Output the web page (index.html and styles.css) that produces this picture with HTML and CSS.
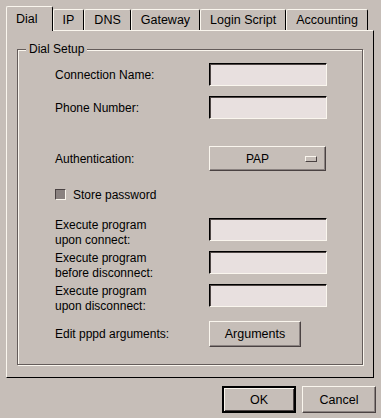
FILE: index.html
```html
<!DOCTYPE html>
<html lang="en">
<head>
  <meta charset="UTF-8">
  <title>Dial Setup</title>
  <link rel="stylesheet" href="styles.css">
</head>
<body>
  <div class="dialog">
    <div class="tabs">
      <div class="tab active">Dial</div>
      <div class="tab">IP</div>
      <div class="tab">DNS</div>
      <div class="tab">Gateway</div>
      <div class="tab">Login Script</div>
      <div class="tab">Accounting</div>
    </div>
    <div class="panel">
      <div class="group">
        <span class="group-title">Dial Setup</span>
        <div class="row first">
          <label class="label">Connection Name:</label>
          <input type="text" class="field">
        </div>
        <div class="row">
          <label class="label">Phone Number:</label>
          <input type="text" class="field">
        </div>
        <div class="row auth">
          <label class="label">Authentication:</label>
          <div class="option-menu">
            <span class="option-text">PAP</span>
            <span class="option-mark"></span>
          </div>
        </div>
        <div class="row check-row">
          <span class="check"></span>
          <span>Store password</span>
        </div>
        <div class="row exec">
          <label class="label two-line">Execute program<br>upon connect:</label>
          <input type="text" class="field">
        </div>
        <div class="row">
          <label class="label two-line">Execute program<br>before disconnect:</label>
          <input type="text" class="field">
        </div>
        <div class="row">
          <label class="label two-line">Execute program<br>upon disconnect:</label>
          <input type="text" class="field">
        </div>
        <div class="row args">
          <label class="label">Edit pppd arguments:</label>
          <button type="button" class="btn btn-args">Arguments</button>
        </div>
      </div>
    </div>
    <div class="actions">
      <button type="button" class="btn btn-default">OK</button>
      <button type="button" class="btn">Cancel</button>
    </div>
  </div>
</body>
</html>
```

FILE: styles.css
```css
body {
  margin: 0;
  padding: 6px 0 0 6px;
  background: #c6beb8;
  font-family: "Liberation Sans", Arial, sans-serif;
  font-size: 12px;
  color: #000;
}

.dialog {
  width: 368px;
}

/* tab strip */
.tabs {
  display: flex;
  align-items: flex-end;
  height: 25px;
  margin-bottom: -1px;
  position: relative;
  z-index: 1;
}

.tab {
  height: 20px;
  line-height: 20px;
  margin-bottom: 1px;
  padding: 0 9px;
  border: 1px solid;
  border-color: #faf6ee #000 transparent #faf6ee;
  border-bottom: 0;
  border-radius: 2px 2px 0 0;
  font-size: 12.5px;
}

.tab.active {
  height: 24px;
  line-height: 24px;
  margin-bottom: 0;
  padding: 0 14px 0 9px;
  background: #c6beb8;
}

/* notebook page */
.panel {
  box-sizing: border-box;
  height: 348px;
  padding: 18px 10px 0 10px;
  border: 1px solid;
  border-color: #faf6ee #000 #000 #faf6ee;
}

.group {
  position: relative;
  box-sizing: border-box;
  height: 316px;
  padding-left: 37px;
  border: 1px solid #645c5a;
  box-shadow: 1px 1px 0 #faf6ee, inset 1px 1px 0 #faf6ee;
}

.group-title {
  position: absolute;
  top: -8px;
  left: 8px;
  padding: 0 3px;
  line-height: 14px;
  background: #c6beb8;
}

.row {
  display: flex;
  align-items: center;
  height: 23px;
  margin-top: 10px;
}

.row.first {
  margin-top: 13px;
}

.row.auth {
  height: 25px;
  margin-top: 27px;
}

.row.check-row {
  height: 17px;
  margin-top: 15px;
}

.row.exec {
  margin-top: 15px;
}

.row.args {
  height: 26px;
  margin-top: 14px;
}

.label {
  width: 154px;
  flex: none;
}

.label.two-line {
  align-self: flex-start;
  line-height: 15px;
}

.field {
  box-sizing: border-box;
  width: 118px;
  height: 23px;
  margin: 0;
  padding: 0 3px;
  border: 1px solid;
  border-color: #000 #faf6ee #faf6ee #000;
  box-shadow: inset 1px 1px 0 #4e4644;
  background: #e8e0df;
  font: inherit;
}

.option-menu {
  box-sizing: border-box;
  display: flex;
  align-items: center;
  width: 117px;
  height: 25px;
  border: 1px solid;
  border-color: #faf6ee #4a4242 #4a4242 #faf6ee;
  box-shadow: inset -1px -1px 0 #8a8280;
}

.option-text {
  flex: 1;
  text-align: center;
}

.option-mark {
  box-sizing: border-box;
  width: 12px;
  height: 6px;
  margin-right: 8px;
  border: 1px solid;
  border-color: #faf6ee #4a4242 #4a4242 #faf6ee;
}

.check {
  box-sizing: border-box;
  width: 11px;
  height: 11px;
  margin-right: 7px;
  border: 1px solid;
  border-color: #4a4242 #faf6ee #faf6ee #4a4242;
  background: #8a8280;
}

/* buttons */
.btn {
  box-sizing: border-box;
  width: 74px;
  height: 27px;
  margin: 0;
  padding: 0;
  border: 1px solid;
  border-color: #faf6ee #4a4242 #4a4242 #faf6ee;
  box-shadow: inset -1px -1px 0 #8a8280;
  background: #c6beb8;
  color: #000;
  font: inherit;
  font-size: 12.5px;
}

.btn-args {
  width: 92px;
  height: 26px;
}

.btn-default {
  border: 2px solid #000;
  box-shadow: inset 1px 1px 0 #faf6ee, inset -1px -1px 0 #4a4242;
}

.actions {
  display: flex;
  justify-content: flex-end;
  gap: 6px;
  margin: 8px -2px 0 0;
}
```
